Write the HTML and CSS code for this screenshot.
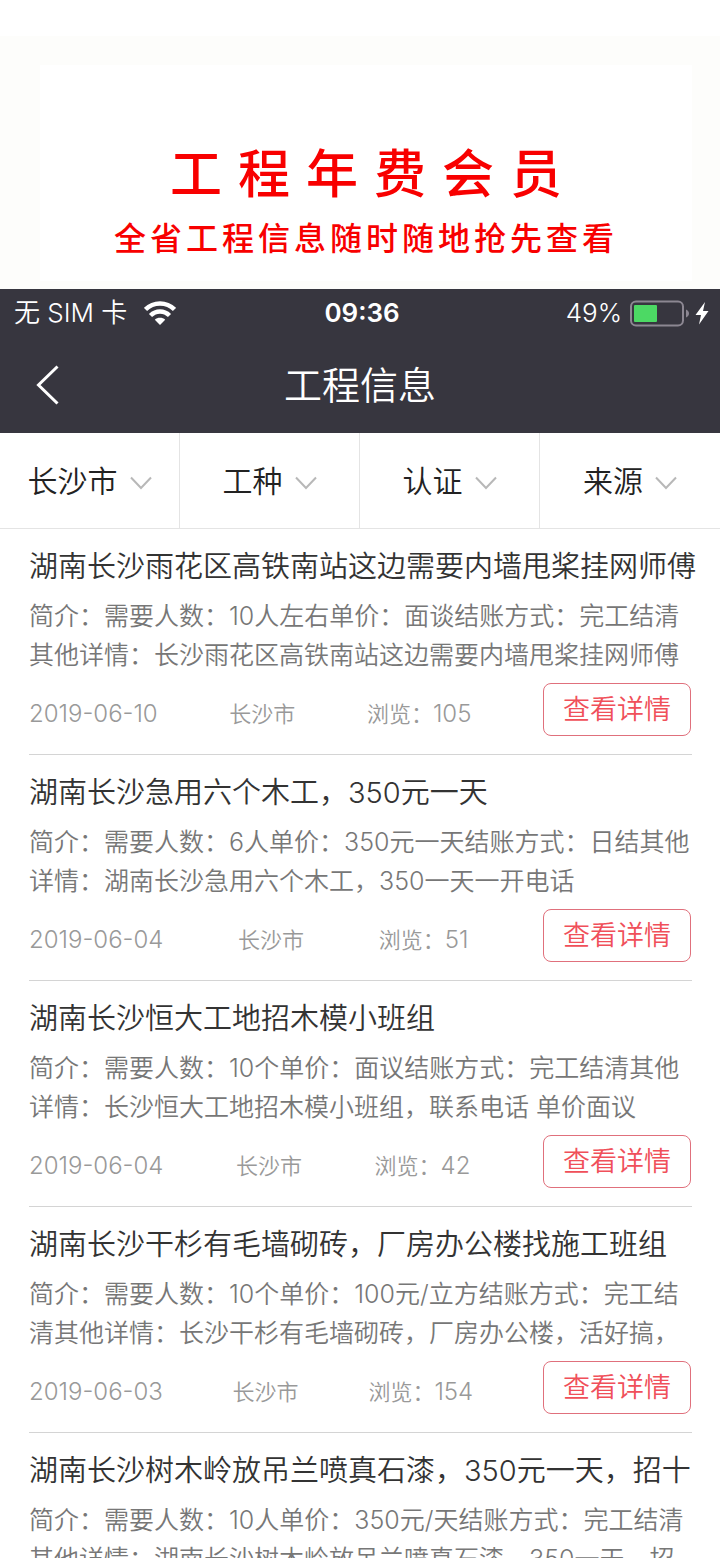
FILE: index.html
```html
<!DOCTYPE html>
<html lang="zh-CN">
<head>
  <meta charset="UTF-8">
  <meta name="viewport" content="width=device-width, initial-scale=1.0">
  <title>工程信息</title>
  <link rel="stylesheet" href="styles.css">
</head>
<body>
  <div class="promo">
    <div class="promo-card">
      <h1>工程年费会员</h1>
      <p>全省工程信息随时随地抢先查看</p>
    </div>
  </div>

  <header class="header">
    <div class="status-bar">
      <div class="status-left">
        <span>无 SIM 卡</span>
        <svg width="32" height="24" viewBox="0 0 32 24" fill="none" stroke="#fff" stroke-width="4.500">
          <path d="M1.500 8.500C9.500 .4 22.500 .4 30.500 8.500"/>
          <path d="M6.500 14.500C12 9.200 20 9.200 25.500 14.500"/>
          <path d="M16 24L10.800 18.800C13.500 16.200 18.500 16.200 21.200 18.800Z" fill="#fff" stroke="none"/>
        </svg>
      </div>
      <div class="status-time">09:36</div>
      <div class="status-right">
        <span>49%</span>
        <svg width="80" height="28" viewBox="0 0 80 28">
          <rect x="1" y="2.500" width="52" height="24" rx="5" fill="none" stroke="#8c8792" stroke-width="2"/>
          <rect x="4" y="6" width="23" height="17" rx="1" fill="#4cd964"/>
          <path d="M56 10.500C60 12 60 17 56 18.500Z" fill="#8c8792"/>
          <path d="M75 3L65.500 16H71L69 25.500L78.500 12H73Z" fill="#fff"/>
        </svg>
      </div>
    </div>
    <nav class="nav-bar">
      <button class="back" aria-label="返回">
        <svg width="24" height="40" viewBox="0 0 24 40" fill="none" stroke="#fff" stroke-width="3">
          <path d="M21.500 1.500L2.500 20L21.500 38.500"/>
        </svg>
      </button>
      <h2>工程信息</h2>
    </nav>
  </header>

  <div class="filters">
    <label class="filter">
      <select aria-label="城市"><option>长沙市</option></select>
      <svg class="arrow" viewBox="0 0 22 14"><path d="M1 1.500L11 12L21 1.500"/></svg>
    </label>
    <label class="filter">
      <select aria-label="工种"><option>工种</option></select>
      <svg class="arrow" viewBox="0 0 22 14"><path d="M1 1.500L11 12L21 1.500"/></svg>
    </label>
    <label class="filter">
      <select aria-label="认证"><option>认证</option></select>
      <svg class="arrow" viewBox="0 0 22 14"><path d="M1 1.500L11 12L21 1.500"/></svg>
    </label>
    <label class="filter">
      <select aria-label="来源"><option>来源</option></select>
      <svg class="arrow" viewBox="0 0 22 14"><path d="M1 1.500L11 12L21 1.500"/></svg>
    </label>
  </div>

  <main class="list">
    <article class="item">
      <h3>湖南长沙雨花区高铁南站这边需要内墙甩桨挂网师傅</h3>
      <p>简介：需要人数：10人左右单价：面谈结账方式：完工结清<br>其他详情：长沙雨花区高铁南站这边需要内墙甩桨挂网师傅</p>
      <div class="meta">
        <span class="num">2019-06-10</span>
        <span>长沙市</span>
        <span>浏览：<b class="num">105</b></span>
        <button class="detail">查看详情</button>
      </div>
    </article>
    <article class="item">
      <h3>湖南长沙急用六个木工，350元一天</h3>
      <p>简介：需要人数：6人单价：350元一天结账方式：日结其他<br>详情：湖南长沙急用六个木工，350一天一开电话</p>
      <div class="meta">
        <span class="num">2019-06-04</span>
        <span>长沙市</span>
        <span>浏览：<b class="num">51</b></span>
        <button class="detail">查看详情</button>
      </div>
    </article>
    <article class="item">
      <h3>湖南长沙恒大工地招木模小班组</h3>
      <p>简介：需要人数：10个单价：面议结账方式：完工结清其他<br>详情：长沙恒大工地招木模小班组，联系电话 单价面议</p>
      <div class="meta">
        <span class="num">2019-06-04</span>
        <span>长沙市</span>
        <span>浏览：<b class="num">42</b></span>
        <button class="detail">查看详情</button>
      </div>
    </article>
    <article class="item">
      <h3>湖南长沙干杉有毛墙砌砖，厂房办公楼找施工班组</h3>
      <p>简介：需要人数：10个单价：100元/立方结账方式：完工结<br>清其他详情：长沙干杉有毛墙砌砖，厂房办公楼，活好搞，</p>
      <div class="meta">
        <span class="num">2019-06-03</span>
        <span>长沙市</span>
        <span>浏览：<b class="num">154</b></span>
        <button class="detail">查看详情</button>
      </div>
    </article>
    <article class="item">
      <h3>湖南长沙树木岭放吊兰喷真石漆，350元一天，招十</h3>
      <p>简介：需要人数：10人单价：350元/天结账方式：完工结清<br>其他详情：湖南长沙树木岭放吊兰喷真石漆，350一天，招</p>
    </article>
  </main>
</body>
</html>
```
FILE: styles.css
```css
* {
  box-sizing: border-box;
}
body {
  display: flex;
  flex-direction: column;
  height: 100vh;
  margin: 0;
  overflow: hidden;
  background: #fff;
  font-family: Inter, "Noto Sans CJK SC", sans-serif;
  font-weight: 350;
}
h1, h2, h3, p {
  margin: 0;
  font-weight: inherit;
}
button, select {
  padding: 0;
  border: none;
  background: none;
  font: inherit;
  color: inherit;
  cursor: pointer;
}

/* promo */
.promo {
  flex: none;
  margin-top: 36px;
  padding: 29px 28px 8px 40px;
  background: #fdfdfb;
}
.promo-card {
  padding: 72px 0 16px;
  background: #fff;
  color: #f80000;
  text-align: center;
  white-space: nowrap;
}
.promo h1 {
  padding-left: 16px;
  font-size: 52px;
  font-weight: 500;
  line-height: 76px;
  letter-spacing: 16px;
}
.promo p {
  font-size: 32px;
  font-weight: 500;
  line-height: 52px;
  letter-spacing: 4px;
}

/* header */
.header {
  flex: none;
  background: #37363f;
  color: #fff;
}
.status-bar {
  display: grid;
  grid-template-columns: 1fr auto 1fr;
  align-items: center;
  height: 47px;
  padding: 0 10px 0 14px;
  font-size: 26px;
  line-height: 32px;
}
.status-left, .status-right {
  display: flex;
  align-items: center;
  gap: 8px;
}
.status-left {
  gap: 17px;
}
.status-right {
  justify-content: flex-end;
}
.status-time {
  font-weight: 600;
}
.nav-bar {
  display: grid;
  grid-template-columns: 60px 1fr 60px;
  align-items: center;
  height: 97px;
}
.back {
  display: flex;
  justify-content: flex-end;
}
.nav-bar h2 {
  font-size: 38px;
  line-height: 56px;
  text-align: center;
}

/* filters */
.filters {
  flex: none;
  display: grid;
  grid-template-columns: repeat(4, 1fr);
  height: 96px;
  border-bottom: 1px solid #e4e4e4;
}
.filter {
  display: flex;
  align-items: center;
  justify-content: center;
  gap: 12px;
  border-right: 1px solid #e4e4e4;
  color: #222;
  font-size: 30px;
}
.filter:last-child {
  border-right: none;
}
.filter select {
  appearance: none;
}
.arrow {
  width: 22px;
  height: 14px;
  margin-top: 4px;
  fill: none;
  stroke: #b8b8b8;
  stroke-width: 2;
  pointer-events: none;
}

/* list */
.list {
  flex: 1;
  min-height: 0;
  padding: 0 28px 0 29px;
  overflow: auto;
  scrollbar-width: none;
}
.item {
  padding: 18px 0;
  border-bottom: 1px solid #d4d4d4;
  white-space: nowrap;
}
.item h3 {
  color: #333;
  font-size: 29px;
  line-height: 40px;
}
.item p {
  margin: 10px 0 8px;
  color: #777;
  font-size: 25px;
  line-height: 39px;
}
.meta {
  display: flex;
  align-items: center;
  justify-content: space-between;
  padding-right: 1px;
  color: #999;
  font-size: 22px;
  line-height: 30px;
}
.meta span {
  padding-top: 9px;
}
.meta .num {
  font-size: 24px;
  font-weight: inherit;
}
.detail {
  width: 148px;
  height: 53px;
  border: 1px solid #e0707c;
  border-radius: 8px;
  color: #f0505a;
  font-size: 27px;
}
```
